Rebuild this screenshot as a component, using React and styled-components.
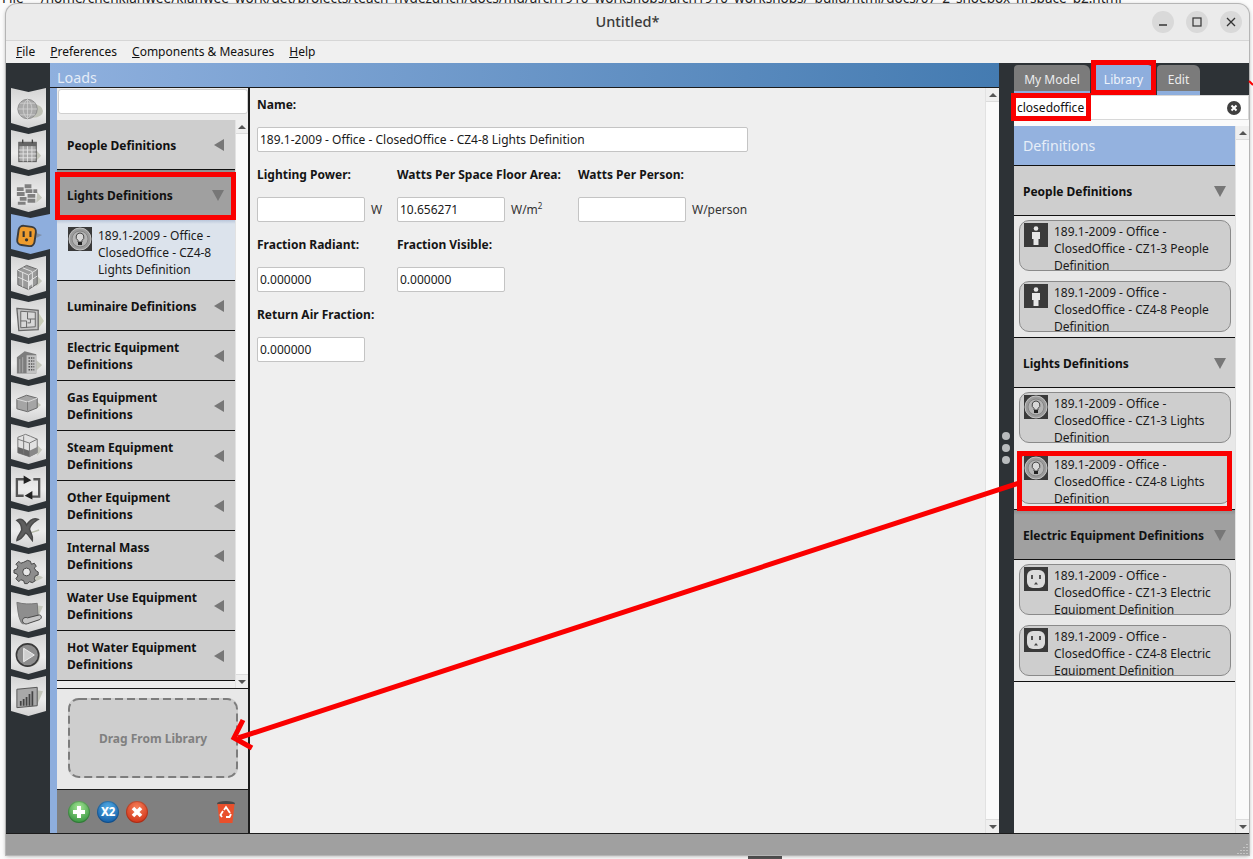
import React from 'react';
import styled, { createGlobalStyle } from 'styled-components';

const FONT = '"Noto Sans", "Open Sans", sans-serif';

const GlobalStyle = createGlobalStyle`
  html, body {
    margin: 0;
    padding: 0;
    width: 1253px;
    height: 859px;
    overflow: hidden;
    background: #fbfbfb;
    font-family: ${FONT};
    color: #111;
  }
  * { box-sizing: border-box; }
`;

const Page = styled.div`
  position: relative;
  width: 1253px;
  height: 859px;
  padding: 4px 4px 4px 6px;
  overflow: hidden;
`;

const BackdropPath = styled.div`
  position: absolute;
  top: -10px;
  left: 2px;
  display: flex;
  gap: 17px;
  font-size: 13.55px;
  line-height: 16px;
  white-space: nowrap;
  color: #222;
`;

const BackdropScrap = styled.div`
  position: absolute;
  left: 748px;
  bottom: 0;
  width: 34px;
  height: 4px;
  background: #555;
`;

const Window = styled.div`
  position: relative;
  width: 1243px;
  height: 851px;
  display: flex;
  flex-direction: column;
  border-radius: 11px 11px 0 0;
  background: #ebebeb;
  box-shadow: 0 0 0 1px #b5b5b5, 0 1px 4px rgba(0, 0, 0, 0.35);
  overflow: hidden;
`;

const TitleBar = styled.div`
  position: relative;
  height: 37px;
  flex: none;
  display: flex;
  align-items: center;
  justify-content: center;
  padding-bottom: 2px;
  font-size: 14.5px;
  color: #3a3a3a;
  font-weight: 500;
  border-bottom: 1px solid #d6d6d6;
`;

const WindowControls = styled.div`
  position: absolute;
  top: 7px;
  right: 7px;
  display: flex;
  gap: 12px;
`;

const ControlButton = styled.div`
  width: 22px;
  height: 22px;
  border-radius: 50%;
  background: #d9d9d9;
  display: flex;
  align-items: center;
  justify-content: center;
`;

const MenuBar = styled.div`
  height: 22px;
  flex: none;
  display: flex;
  align-items: center;
  padding: 0 0 2px 10px;
  gap: 15px;
  background: #f0f0f0;
  font-size: 12px;
  color: #111;
`;

const MenuItem = styled.span`
  &::first-letter {
    text-decoration: underline;
  }
`;

const Body = styled.div`
  flex: 1;
  min-height: 0;
  display: flex;
  background: #2d3236;
`;

const NavRail = styled.div`
  width: 44px;
  flex: none;
  padding: 25px 0 0 5px;
  display: flex;
  flex-direction: column;
`;

const NavTab = styled.div`
  width: ${(p) => (p.$active ? '39px' : '35px')};
  height: 42px;
  flex: none;
  display: flex;
  align-items: center;
  justify-content: center;
  padding: 0 ${(p) => (p.$active ? '6px' : '2px')} 0 2px;
  background: ${(p) =>
    p.$active ? '#8eaedd' : 'linear-gradient(#d4d4d4, #ececec 55%, #cfcfcf)'};
  clip-path: polygon(0 0, 50% 4px, 100% 0, 100% 35px, 50% 40px, 0 35px);
`;

const Workspace = styled.div`
  flex: 1;
  min-width: 0;
  display: flex;
  flex-direction: column;
`;

const HeaderRow = styled.div`
  flex: 1;
  min-height: 0;
  display: flex;
`;

const MainColumn = styled.div`
  width: 949px;
  flex: none;
  display: flex;
  flex-direction: column;
  background: #8eaedd;
`;

const LoadsHeader = styled.div`
  height: 25px;
  flex: none;
  padding-left: 7px;
  font-size: 14.3px;
  line-height: 29px;
  color: #e4ecf7;
  background: linear-gradient(90deg, #8fb0de, #447bb1);
  border-bottom: 1px solid #1c1c1c;
  overflow: hidden;
`;

const MainPanels = styled.div`
  flex: 1;
  min-height: 0;
  display: flex;
  margin-left: 7px;
  background: #1c1c1c;
`;

const LeftPanel = styled.div`
  width: 191px;
  flex: none;
  display: flex;
  flex-direction: column;
  background: #ededed;
`;

const SearchBox = styled.div`
  height: 25px;
  flex: none;
  margin: 1px 0 0 1px;
  background: #fff;
  border: 1px solid #d0d0d0;
  border-radius: 3px;
`;

const ListArea = styled.div`
  height: 575px;
  flex: none;
  display: flex;
  padding-top: 6px;
  border-bottom: 1px solid #1c1c1c;
  background: #ededed;
`;

const ListColumn = styled.div`
  width: 178px;
  flex: none;
`;

const Scrollbar = styled.div`
  width: ${(p) => p.$width}px;
  flex: none;
  display: flex;
  flex-direction: column;
  justify-content: space-between;
  background: #fafafa;
  border-left: 1px solid #e2e2e2;
`;

const ScrollArrow = styled.div`
  height: 14px;
  display: flex;
  align-items: center;
  justify-content: center;
  background: #efefef;
  border-${(p) => (p.$down ? 'top' : 'bottom')}: 1px solid #dcdcdc;
  &::before {
    content: '';
    border-left: 4px solid transparent;
    border-right: 4px solid transparent;
    border-${(p) => (p.$down ? 'top' : 'bottom')}: 4px solid #555;
  }
`;

const SectionHeader = styled.div`
  height: ${(p) => p.$height || 50}px;
  display: flex;
  align-items: center;
  justify-content: space-between;
  padding: 1px ${(p) => (p.$wide ? 9 : 11)}px 0 ${(p) => (p.$wide ? 9 : 10)}px;
  background: ${(p) =>
    p.$selected ? 'linear-gradient(#8d8d8d, #a0a0a0 5px)' : '#cecece'};
  border-bottom: 1px solid #111;
  font-size: 12px;
  font-weight: 700;
  line-height: 17px;
  color: #111;
`;

const Triangle = styled.span`
  flex: none;
  width: 0;
  height: 0;
  ${(p) =>
    p.$open
      ? `border-left: 6px solid transparent;
         border-right: 6px solid transparent;
         border-top: 11px solid #777;`
      : `border-top: 6px solid transparent;
         border-bottom: 6px solid transparent;
         border-right: 10px solid #777;`}
`;

const DefinitionRow = styled.div`
  height: 61px;
  display: flex;
  gap: 6px;
  padding: 7px 10px 0 11px;
  background: linear-gradient(#b9c6da, #dce3ec 4px);
  border-bottom: 1px solid #111;
  overflow: hidden;
`;

const RowText = styled.div`
  font-size: 12px;
  line-height: 17px;
  color: #1a1a1a;
`;

const Thumb = styled.div`
  width: 24px;
  height: 24px;
  flex: none;
  background: #3a3a3a;
  display: flex;
  align-items: center;
  justify-content: center;
`;

const DropSection = styled.div`
  flex: 1;
  min-height: 0;
  padding: 9px 10px 10px 11px;
  background: #e8e8e8;
  display: flex;
`;

const DropZone = styled.div`
  position: relative;
  width: 170px;
  height: 80px;
  border-radius: 10px;
  background: #cecece;
  display: flex;
  align-items: center;
  justify-content: center;
  font-size: 12px;
  font-weight: 700;
  color: #808080;
`;

const DashedEdge = styled.svg`
  position: absolute;
  top: 0;
  left: 0;
`;

const BottomBar = styled.div`
  height: 44px;
  flex: none;
  display: flex;
  align-items: center;
  gap: 7px;
  padding: 0 12px 0 11px;
  background: #808080;
  border-top: 1px solid #1c1c1c;
`;

const RoundButton = styled.div`
  width: 22px;
  height: 22px;
  border-radius: 50%;
  display: flex;
  align-items: center;
  justify-content: center;
  background: radial-gradient(circle at 50% 30%, ${(p) => p.$light}, ${(p) => p.$dark} 85%);
  box-shadow: inset 0 0 0 1px rgba(0, 0, 0, 0.18);
  font-size: 11.5px;
  font-weight: 800;
  letter-spacing: -0.3px;
  color: #fff;
`;

const TrashSlot = styled.div`
  margin-left: auto;
  display: flex;
`;

const Content = styled.div`
  flex: 1;
  min-width: 0;
  display: flex;
  margin-left: 2px;
  background: #efefef;
`;

const Form = styled.div`
  flex: 1;
  min-width: 0;
  padding: 0 0 0 7px;
`;

const FormRow = styled.div`
  height: 70px;
  display: grid;
  grid-template-columns: 140px 181px 181px;
  grid-template-rows: 35px 33px;
  align-items: center;
`;

const NameRow = styled(FormRow)`
  grid-template-columns: 491px;
`;

const Label = styled.div`
  font-size: 12px;
  font-weight: 700;
  color: #151515;
  white-space: nowrap;
  padding-bottom: 3px;
`;

const FieldCell = styled.div`
  display: flex;
  align-items: center;
  gap: 6px;
  font-size: 12px;
  color: #333;
`;

const Field = styled.div`
  width: ${(p) => p.$width || 108}px;
  height: 25px;
  flex: none;
  padding-left: 2px;
  background: #fff;
  border: 1px solid #c4c4c4;
  border-radius: 2px;
  font-size: 12px;
  line-height: 23px;
  color: #1a1a1a;
  white-space: nowrap;
`;

const Sup = styled.sup`
  font-size: 8px;
  line-height: 0;
`;

const Divider = styled.div`
  width: 15px;
  flex: none;
  position: relative;
  background: #2d3236;
`;

const GripDots = styled.div`
  position: absolute;
  top: 369px;
  left: 3px;
  display: flex;
  flex-direction: column;
  gap: 4px;
  & > span {
    width: 8px;
    height: 8px;
    border-radius: 50%;
    background: #b9bcbe;
  }
`;

const Library = styled.div`
  flex: 1;
  min-width: 0;
  display: flex;
  flex-direction: column;
  background: #2d3236;
`;

const TabRow = styled.div`
  height: 32px;
  flex: none;
  display: flex;
  align-items: flex-end;
  gap: 3px;
  padding-top: 2px;
`;

const LibraryTab = styled.div`
  width: ${(p) => p.$width}px;
  height: 30px;
  padding-top: 5px;
  text-align: center;
  font-size: 12px;
  line-height: 20px;
  border-radius: 4px 6px 0 0;
  color: ${(p) => (p.$active ? '#eef3fb' : '#ececec')};
  background: ${(p) => (p.$active ? '#8eaedd' : '#7b7b7b')};
  border-bottom: 4px solid #8eaedd;
`;

const LibrarySearch = styled.div`
  height: 25px;
  flex: none;
  display: flex;
  align-items: center;
  justify-content: space-between;
  padding: 0 7px 0 2px;
  background: #fff;
  border: 1px solid #d8d8d8;
  font-size: 12px;
  color: #111;
`;

const LibraryBody = styled.div`
  flex: 1;
  min-height: 0;
  display: flex;
  padding-top: 6px;
  background: #fafafa;
`;

const LibraryList = styled.div`
  width: 221px;
  flex: none;
  background: #efefef;
  margin-top: 0;
`;

const LibraryTitle = styled.div`
  height: 40px;
  padding-left: 9px;
  font-size: 14.2px;
  line-height: 39px;
  color: #e7eef8;
  background: #94b2df;
  border-bottom: 1px solid #111;
`;

const ItemGroup = styled.div`
  display: flex;
  flex-direction: column;
  gap: 10px;
  padding: 4px 4px 5px 5px;
  background: #e8e8e8;
  border-bottom: 1px solid #111;
`;

const LibraryItem = styled.div`
  height: 51px;
  display: flex;
  gap: 6px;
  padding: 2px 8px 0 4px;
  background: #cecece;
  border: 1px solid #8a8a8a;
  border-radius: 10px;
  overflow: hidden;
`;

const StatusBar = styled.div`
  height: 22px;
  flex: none;
  position: relative;
  display: flex;
  justify-content: flex-end;
  align-items: flex-end;
  background: #a0a0a0;
  border-top: 1px solid #1c1c1c;
`;

const Overlay = styled.svg`
  position: absolute;
  top: 0;
  left: 0;
  pointer-events: none;
`;

const navIcons = [
  <>
    <ellipse cx="21" cy="17" rx="10" ry="7" fill="#bfc1b6" />
    <circle cx="15" cy="15" r="10" fill="#a9a9a9" stroke="#8a8a8a" />
    <path d="M5 15h20M15 5v20M7 9h16M7 21h16M15 5c-6 5-6 15 0 20M15 5c6 5 6 15 0 20" fill="none" stroke="#d4d4d4" strokeWidth=".8" />
  </>,
  <>
    <path d="M24 14l5 6-6 6z" fill="#c4c6bb" />
    <rect x="6" y="6" width="18" height="20" fill="#a9a9a9" stroke="#555" />
    <rect x="6" y="6" width="18" height="4" fill="#666" />
    <path d="M6 14h18M6 18h18M6 22h18M10.500 10v16M15 10v16M19.500 10v16" stroke="#e6e6e6" strokeWidth=".9" />
    <path d="M10 3v4M20 3v4" stroke="#444" strokeWidth="1.4" />
  </>,
  <>
    <path d="M25 14l5 6-6 5z" fill="#c4c6bb" />
    <path d="M3 9l8-3 8 1 6 3v4l-6 2v9l-9 2-7-3z" fill="#e6e6e6" />
    <path d="M4 9h7v4H4zM12 6h7v4h-7zM13 11h7v4h-7zM21 11h4v4h-4zM4 14h8v4H4zM7 19h7v4H7zM15 16h8v4h-8zM5 24h8v3H5zM15 21h8v4h-8z" fill="#808080" />
  </>,
  <>
    <path d="M24 13l6 2-6 3z" fill="#7e8ea5" />
    <rect x="5" y="6" width="18" height="20" rx="5" transform="rotate(8 14 16)" fill="#ee9c2e" stroke="#3c3c3c" strokeWidth="2" />
    <path d="M11 11v6M18 11v6" stroke="#333" strokeWidth="2.2" />
    <circle cx="14" cy="20" r="1.700" fill="#333" />
  </>,
  <>
    <path d="M25 14l5 5-6 6z" fill="#c4c6bb" />
    <path d="M14 3l11 4v15l-9 6-11-5V8z" fill="#9a9a9a" stroke="#666" />
    <path d="M5 8l11 5 9-6M16 13v15M10 5.500l10 4M10 10v15M20 10v15M5 15l11 5 9-6" fill="none" stroke="#e4e4e4" />
    <path d="M16 20l4.500-3v5l-4.500 3z" fill="#e2e2e2" />
  </>,
  <>
    <path d="M26 8l6 9-6 8z" fill="#c9ccb8" />
    <path d="M4 4l22 2v20l-20 1z" fill="#c4c4c4" stroke="#666" strokeWidth="1.300" />
    <path d="M8 7l15 1v15l-15 1z" fill="#d8d8d8" stroke="#666" />
    <path d="M15 8v7h8M8 17h6v7M18 15v4h-3" fill="none" stroke="#666" />
  </>,
  <>
    <path d="M24 14l6 5-6 6z" fill="#c4c6bb" />
    <path d="M4 11l8-6 12 3v20H4z" fill="#7d7d7d" />
    <path d="M14 9h10v19H14z" fill="#c2c2c2" />
    <path d="M16 12h6M16 15h6M16 18h6M16 21h6M16 24h6" stroke="#555" strokeWidth="1.500" strokeDasharray="1.500 1" />
    <path d="M7 13v14M10 11v16" stroke="#aaa" />
  </>,
  <>
    <path d="M24 13l5 4-5 4z" fill="#c4c6bb" />
    <path d="M4 11l10-4 11 3v10l-10 4-11-3z" fill="#a5a5a5" stroke="#666" />
    <path d="M4 11l11 3 10-4" fill="none" stroke="#ddd" />
    <path d="M15 14v9" stroke="#777" />
  </>,
  <>
    <path d="M25 15l5 5-5 6z" fill="#c4c6bb" />
    <path d="M5 7l8-3 5 2 7 3v14l-8 4-12-4z" fill="#e2e2e2" stroke="#777" />
    <path d="M5 17l12 4v6l-12-4z" fill="#666" />
    <path d="M17 21l8-4v6l-8 4z" fill="#888" />
    <path d="M5 9l12 4 8-4M17 13v14M11 6v18" fill="none" stroke="#777" />
  </>,
  <>
    <path d="M12 7H4v17h7M19 25h8V7h-6" fill="none" stroke="#555" strokeWidth="2.400" />
    <path d="M11 3l8 5-8 4zM20 19l-8 5 8 4z" fill="#222" />
  </>,
  <>
    <path d="M27 16l-9 3" stroke="#b8bcaa" strokeWidth="1.500" />
    <path d="M4 6c5-3 8 1 10 5 3-5 7-8 12-6-3 2-8 5-9 10 1 4 4 7 3 12-3-4-6-8-7-8-2 3-5 7-9 8 0-4 4-8 5-11C9 12 7 8 4 6z" fill="#5e5e5e" stroke="#4a4a4a" strokeWidth="1.500" />
  </>,
  <>
    <path d="M23 20c3-1 6 0 8 2l-8 4z" fill="#c4c6bb" />
    <path d="M15 4l3 1 1 3 3-1 2 3-2 2 2 3 2 1v3l-3 1-1 3 1 2-3 2-3-1-2 2h-3l-1-3-3-1-2 2-3-3 2-3-1-2-3-1v-3l3-1 1-3-2-2 3-3 2 2 3-1z" fill="#8d8d8d" stroke="#444" />
    <circle cx="14" cy="16" r="4" fill="#e8e8e8" stroke="#444" />
  </>,
  <>
    <path d="M24 7l7 1-6 13z" fill="#c4c6bb" />
    <path d="M4 4c7 2 13 2 21 1l1 15-12 3c-1 4-5 4-6 1C5 18 5 10 4 4z" fill="#8e8e8e" stroke="#777" />
    <path d="M10 24c-1-4 3-5 5-4l12-3c3 0 3 4 0 5l-12 4c-2 1-4 0-5-2z" fill="#c5c5c5" stroke="#444" />
  </>,
  <>
    <circle cx="17" cy="16" r="11" fill="#bdbdb0" opacity=".8" />
    <circle cx="15" cy="15" r="11.500" fill="#8d8d8d" stroke="#3a3a3a" strokeWidth="1.600" />
    <path d="M11 8l11 7-11 7z" fill="#cfcfcf" stroke="#f0f0f0" />
  </>,
  <>
    <path d="M25 8l6 1-6 14z" fill="#c4c6bb" />
    <path d="M4 7l21-2v19l-21 2z" fill="#a9a9a9" stroke="#555" />
    <path d="M8 24v-5M11 24v-7M14 24v-9M17 24V12M20 24V9" stroke="#444" strokeWidth="1.800" />
  </>,
];

function NavIcon({ children }) {
  return (
    <svg width="32" height="30" viewBox="0 0 32 30">
      {children}
    </svg>
  );
}

function BulbIcon() {
  return (
    <svg width="24" height="24" viewBox="0 0 24 24">
      <circle cx="12" cy="12" r="11" fill="#9b9b9b" stroke="#c4c4c4" />
      <circle cx="12" cy="12" r="8" fill="#b4b4b4" stroke="#858585" />
      <path d="M12 6a4 4 0 0 0-2 7.400V15h4v-1.600A4 4 0 0 0 12 6z" fill="#d8d8d8" stroke="#444" />
      <rect x="10" y="15" width="4" height="3" fill="#222" />
    </svg>
  );
}

function PersonIcon() {
  return (
    <svg width="24" height="24" viewBox="0 0 24 24">
      <circle cx="12" cy="5.500" r="2.300" fill="#e6e6e6" />
      <path d="M8 9h8v7h-1.500v6h-5v-6H8z" fill="#e6e6e6" />
    </svg>
  );
}

function OutletIcon() {
  return (
    <svg width="24" height="24" viewBox="0 0 24 24">
      <rect x="3" y="3" width="18" height="18" rx="6" fill="#dcdcdc" />
      <path d="M8 8v4M16 8v4" stroke="#444" strokeWidth="1.800" />
      <path d="M12 15l2 2.500h-4z" fill="#444" />
    </svg>
  );
}

const leftSections = [
  { title: 'Luminaire Definitions' },
  { title: 'Electric Equipment Definitions' },
  { title: 'Gas Equipment Definitions' },
  { title: 'Steam Equipment Definitions' },
  { title: 'Other Equipment Definitions' },
  { title: 'Internal Mass Definitions' },
  { title: 'Water Use Equipment Definitions' },
  { title: 'Hot Water Equipment Definitions' },
];

const libraryGroups = [
  {
    title: 'People Definitions',
    icon: <PersonIcon />,
    items: [
      '189.1-2009 - Office - ClosedOffice - CZ1-3 People Definition',
      '189.1-2009 - Office - ClosedOffice - CZ4-8 People Definition',
    ],
  },
  {
    title: 'Lights Definitions',
    icon: <BulbIcon />,
    items: [
      '189.1-2009 - Office - ClosedOffice - CZ1-3 Lights Definition',
      '189.1-2009 - Office - ClosedOffice - CZ4-8 Lights Definition',
    ],
  },
  {
    title: 'Electric Equipment Definitions',
    selected: true,
    icon: <OutletIcon />,
    items: [
      '189.1-2009 - Office - ClosedOffice - CZ1-3 Electric Equipment Definition',
      '189.1-2009 - Office - ClosedOffice - CZ4-8 Electric Equipment Definition',
    ],
  },
];

function Annotations() {
  const red = '#fa0000';
  return (
    <Overlay width="1253" height="859" viewBox="0 0 1253 859">
      <g fill="none" stroke={red} strokeWidth="5">
        <rect x="57.500" y="174.500" width="176" height="43" />
        <rect x="1093.500" y="62.500" width="60" height="30" />
        <rect x="1013.500" y="95.500" width="75" height="23" />
        <rect x="1019.500" y="453.500" width="210" height="55" />
        <path d="M1019 483L238 738" />
        <path d="M243 720l-9 18 18 10" />
        <path d="M1249 81l4 4" strokeWidth="2" />
      </g>
    </Overlay>
  );
}

export default function App() {
  return (
    <Page>
      <GlobalStyle />
      <BackdropPath>
        <span>File</span>
        <span>/home/chenkianwee/kianwee_work/get/projects/teach_nvdezurich/docs/md/arch1910_workshops/arch1910_workshops/_build/html/docs/07_2_shoebox_hrspace_p2.html</span>
      </BackdropPath>
      <BackdropScrap />
      <Window>
        <TitleBar>
          Untitled*
          <WindowControls>
            <ControlButton>
              <svg width="10" height="10" viewBox="0 0 10 10">
                <path d="M1 8h8" stroke="#333" strokeWidth="1.300" />
              </svg>
            </ControlButton>
            <ControlButton>
              <svg width="10" height="10" viewBox="0 0 10 10">
                <rect x="1" y="1" width="8" height="8" fill="none" stroke="#333" strokeWidth="1.200" />
              </svg>
            </ControlButton>
            <ControlButton>
              <svg width="10" height="10" viewBox="0 0 10 10">
                <path d="M1 1l8 8M9 1l-8 8" stroke="#333" strokeWidth="1.300" />
              </svg>
            </ControlButton>
          </WindowControls>
        </TitleBar>
        <MenuBar>
          <MenuItem>File</MenuItem>
          <MenuItem>Preferences</MenuItem>
          <MenuItem>Components &amp; Measures</MenuItem>
          <MenuItem>Help</MenuItem>
        </MenuBar>
        <Body>
          <NavRail>
            {navIcons.map((icon, i) => (
              <NavTab key={i} $active={i === 3}>
                <NavIcon>{icon}</NavIcon>
              </NavTab>
            ))}
          </NavRail>
          <Workspace>
            <HeaderRow>
              <MainColumn>
                <LoadsHeader>Loads</LoadsHeader>
                <MainPanels>
                  <LeftPanel>
                    <SearchBox />
                    <ListArea>
                      <ListColumn>
                        <SectionHeader>
                          People Definitions
                          <Triangle />
                        </SectionHeader>
                        <SectionHeader $selected>
                          Lights Definitions
                          <Triangle $open />
                        </SectionHeader>
                        <DefinitionRow>
                          <Thumb>
                            <BulbIcon />
                          </Thumb>
                          <RowText>
                            189.1-2009 - Office - ClosedOffice - CZ4-8 Lights Definition
                          </RowText>
                        </DefinitionRow>
                        {leftSections.map((s) => (
                          <SectionHeader key={s.title}>
                            <span>{s.title}</span>
                            <Triangle />
                          </SectionHeader>
                        ))}
                      </ListColumn>
                      <Scrollbar $width={13}>
                        <ScrollArrow />
                        <ScrollArrow $down />
                      </Scrollbar>
                    </ListArea>
                    <DropSection>
                      <DropZone>
                        <DashedEdge width="170" height="80" viewBox="0 0 170 80">
                          <rect x="1" y="1" width="168" height="78" rx="10" fill="none" stroke="#7d7d7d" strokeWidth="2" strokeDasharray="8 4" />
                        </DashedEdge>
                        Drag From Library
                      </DropZone>
                    </DropSection>
                    <BottomBar>
                      <RoundButton $light="#a5e695" $dark="#2f8f3a">
                        <svg width="16" height="16" viewBox="0 0 16 16">
                          <path d="M8 2v12M2 8h12" stroke="#fff" strokeWidth="4" />
                        </svg>
                      </RoundButton>
                      <RoundButton $light="#55aee6" $dark="#0e58a3">X2</RoundButton>
                      <RoundButton $light="#f5805a" $dark="#cf2f14">
                        <svg width="14" height="14" viewBox="0 0 14 14">
                          <path d="M3 3l8 8M11 3l-8 8" stroke="#fff" strokeWidth="3.600" />
                        </svg>
                      </RoundButton>
                      <TrashSlot>
                        <svg width="20" height="24" viewBox="0 0 20 24">
                          <ellipse cx="10" cy="3.500" rx="9" ry="2.500" fill="#4a4a4a" />
                          <path d="M1.500 4h17l-2 19h-13z" fill="#e8502c" />
                          <path d="M8 10l2-3 2 3 2 3M15 14l-1.500 3H10M6 17l-1.500-2L7 11" fill="none" stroke="#fff" strokeWidth="1.800" />
                        </svg>
                      </TrashSlot>
                    </BottomBar>
                  </LeftPanel>
                  <Content>
                    <Form>
                      <NameRow>
                        <Label>Name:</Label>
                        <Field $width={491}>189.1-2009 - Office - ClosedOffice - CZ4-8 Lights Definition</Field>
                      </NameRow>
                      <FormRow>
                        <Label>Lighting Power:</Label>
                        <Label>Watts Per Space Floor Area:</Label>
                        <Label>Watts Per Person:</Label>
                        <FieldCell><Field />W</FieldCell>
                        <FieldCell><Field>10.656271</Field><span>W/m<Sup>2</Sup></span></FieldCell>
                        <FieldCell><Field />W/person</FieldCell>
                      </FormRow>
                      <FormRow>
                        <Label>Fraction Radiant:</Label>
                        <Label>Fraction Visible:</Label>
                        <span />
                        <FieldCell><Field>0.000000</Field></FieldCell>
                        <FieldCell><Field>0.000000</Field></FieldCell>
                      </FormRow>
                      <FormRow>
                        <Label>Return Air Fraction:</Label>
                        <span />
                        <span />
                        <FieldCell><Field>0.000000</Field></FieldCell>
                      </FormRow>
                    </Form>
                    <Scrollbar $width={14}>
                      <ScrollArrow />
                      <ScrollArrow $down />
                    </Scrollbar>
                  </Content>
                </MainPanels>
              </MainColumn>
              <Divider>
                <GripDots>
                  <span />
                  <span />
                  <span />
                </GripDots>
              </Divider>
              <Library>
                <TabRow>
                  <LibraryTab $width={76}>My Model</LibraryTab>
                  <LibraryTab $width={61} $active>Library</LibraryTab>
                  <LibraryTab $width={43}>Edit</LibraryTab>
                </TabRow>
                <LibrarySearch>
                  closedoffice
                  <svg width="14" height="14" viewBox="0 0 14 14">
                    <circle cx="7" cy="7" r="7" fill="#3f3f3f" />
                    <path d="M4.500 4.500l5 5M9.500 4.500l-5 5" stroke="#fff" strokeWidth="2" />
                  </svg>
                </LibrarySearch>
                <LibraryBody>
                  <LibraryList>
                    <LibraryTitle>Definitions</LibraryTitle>
                    {libraryGroups.map((group) => (
                      <React.Fragment key={group.title}>
                        <SectionHeader $wide $selected={group.selected}>
                          {group.title}
                          <Triangle $open />
                        </SectionHeader>
                        <ItemGroup>
                          {group.items.map((item) => (
                            <LibraryItem key={item}>
                              <Thumb>{group.icon}</Thumb>
                              <RowText>{item}</RowText>
                            </LibraryItem>
                          ))}
                        </ItemGroup>
                      </React.Fragment>
                    ))}
                  </LibraryList>
                  <Scrollbar $width={14}>
                    <ScrollArrow />
                    <ScrollArrow $down />
                  </Scrollbar>
                </LibraryBody>
              </Library>
            </HeaderRow>
          </Workspace>
        </Body>
        <StatusBar>
          <svg width="12" height="12" viewBox="0 0 12 12">
            <path d="M10 1v1M7 4v1M10 4v1M4 7v1M7 7v1M10 7v1M1 10v1M4 10v1M7 10v1M10 10v1" stroke="#d0d0d0" strokeWidth="1.500" />
          </svg>
        </StatusBar>
      </Window>
      <Annotations />
    </Page>
  );
}
